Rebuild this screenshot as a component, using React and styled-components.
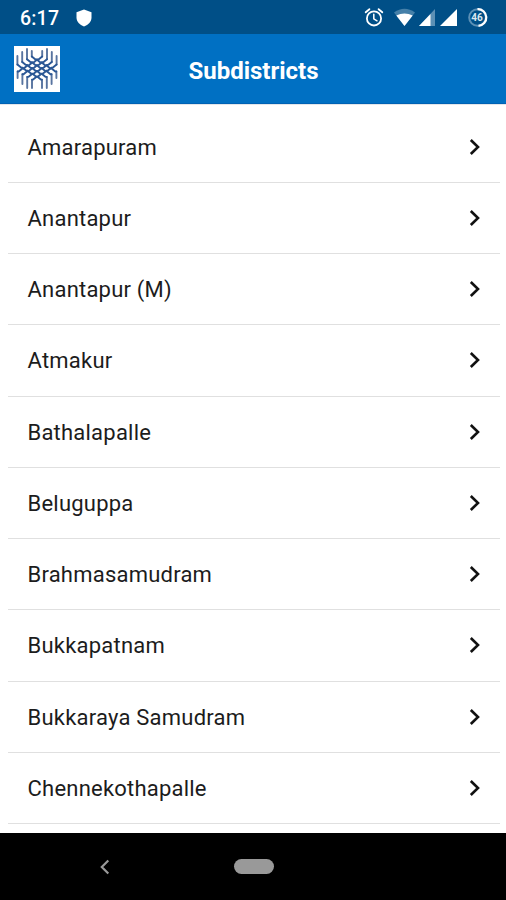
import React from 'react';
import styled, { createGlobalStyle } from 'styled-components';

const GlobalStyle = createGlobalStyle`
  body {
    margin: 0;
    background: #fff;
    font-family: Roboto, sans-serif;
  }
`;

const Screen = styled.div`
  display: flex;
  flex-direction: column;
  width: 506px;
  height: 900px;
  overflow: hidden;
  background: #fff;
`;

const StatusBar = styled.div`
  display: flex;
  flex: none;
  align-items: center;
  justify-content: space-between;
  box-sizing: border-box;
  height: 34px;
  padding: 2px 18px 0 20px;
  background: #004f87;
  color: #fff;
`;

const StatusGroup = styled.div`
  display: flex;
  align-items: center;
  gap: ${(props) => props.$gap || 0}px;
`;

const Clock = styled.span`
  margin-top: 1px;
  font-size: 19.5px;
  font-weight: 500;
  line-height: 24px;
  letter-spacing: 0.2px;
`;

const Header = styled.header`
  display: grid;
  flex: none;
  grid-template-columns: 46px 1fr 46px;
  align-items: center;
  box-sizing: border-box;
  height: 70px;
  padding: 0 13px 0 14px;
  border-bottom: 1px solid #0062b4;
  background: #0070c3;
`;

const Title = styled.h1`
  margin: 4px 0 0;
  color: #fff;
  font-size: 24px;
  font-weight: 700;
  line-height: 30px;
  text-align: center;
`;

const List = styled.ul`
  flex: 1;
  min-height: 0;
  margin: 0;
  padding: 6.5px 6px 0 8px;
  overflow: hidden;
  border-top: 1px solid #e3e6ea;
  list-style: none;
`;

const Row = styled.li`
  display: flex;
  align-items: center;
  justify-content: space-between;
  box-sizing: border-box;
  height: 71.25px;
  padding: 0 18px 0 19.5px;
  border-bottom: 1.5px solid #e0e0e0;
`;

const RowLabel = styled.span`
  padding-top: 2px;
  color: #1c1c1c;
  font-size: 22px;
  font-weight: 400;
  line-height: 28px;
  letter-spacing: 0.22px;
`;

const NavBar = styled.nav`
  display: grid;
  flex: none;
  grid-template-columns: 210px 87px 1fr;
  align-items: center;
  justify-items: center;
  height: 67px;
  background: #000;
`;

const HomePill = styled.span`
  width: 40px;
  height: 15px;
  border-radius: 8px;
  background: #999;
`;

const subdistricts = [
  'Amarapuram',
  'Anantapur',
  'Anantapur (M)',
  'Atmakur',
  'Bathalapalle',
  'Beluguppa',
  'Brahmasamudram',
  'Bukkapatnam',
  'Bukkaraya Samudram',
  'Chennekothapalle',
];

// The stepped line that carries a strand from its upper arm to its lower arm
const steps = 'l3.7 3h1.25l3.7 3h1.25l3.7 3h1.25l3.7 3h1.25l3.7 3h1';

const strands = [
  { arms: 'M17.8 5V10.5M42.4 25.5V32', cross: `M17.8 10.5${steps}` },
  { arms: 'M13 3V13.2M37.6 28.2V38', cross: `M13 13.2${steps}` },
  { arms: 'M8.2 6V15.9M32.8 30.9V42', cross: `M8.2 15.9${steps}` },
  { arms: 'M3.4 10V18.6M28 33.6V42', cross: `M3.4 18.6${steps}` },
];

function Strands() {
  return strands.map(({ arms, cross }) => (
    <React.Fragment key={cross}>
      <path d={arms} stroke="#5874a0" strokeWidth="1.9" />
      <path d={cross} stroke="#2a5795" strokeWidth="1.9" />
    </React.Fragment>
  ));
}

function Logo() {
  return (
    <svg width="46" height="46" viewBox="0 0 46 46">
      <rect width="46" height="46" fill="#fff" />
      <g fill="none" strokeLinecap="round" strokeLinejoin="round">
        <Strands />
        <g transform="translate(46 0) scale(-1 1)">
          <Strands />
        </g>
      </g>
    </svg>
  );
}

function ShieldIcon() {
  return (
    <svg width="16" height="18" viewBox="0 0 16 18">
      <path d="M8 .5L15.5 3.3V8.5C15.5 12.6 12.3 16 8 17.5C3.7 16 .5 12.6 .5 8.5V3.3Z" fill="#fff" />
    </svg>
  );
}

function StatusIcons() {
  return (
    <svg width="124" height="22" viewBox="364 7 124 22">
      <g fill="none" stroke="#fff" strokeWidth="1.8" strokeLinecap="round">
        <circle cx="374" cy="18.4" r="7.1" />
        <path d="M365.7 12.3L369.4 9.2M378.6 9.2L382.3 12.3" />
        <path d="M373.8 14.2V18.8L377 20.8" strokeWidth="1.5" />
      </g>
      <path d="M394 12.5Q404.5 5 415 12.5L404.5 26Z" fill="#4580a9" />
      <path d="M396.3 15.5Q404.5 11.5 412.7 15.5L404.5 26Z" fill="#fff" />
      <path d="M435 9V26H419Z" fill="#5c90b5" />
      <path d="M430.5 14V26H419Z" fill="#fff" />
      <path d="M457 9V26H440Z" fill="#fff" />
      <circle cx="477.5" cy="17.5" r="8.3" fill="none" stroke="#5c90b5" strokeWidth="2" />
      <path d="M477.5 9.2A8.3 8.3 0 0 1 478.5 25.8" fill="none" stroke="#fff" strokeWidth="2.2" />
      <text x="477" y="21.2" fill="#dce8f1" fontSize="10" fontWeight="700" textAnchor="middle">46</text>
    </svg>
  );
}

function ChevronIcon() {
  return (
    <svg width="14" height="18" viewBox="0 0 14 18">
      <path d="M2.8 2L10 9L2.8 16" fill="none" stroke="#111" strokeWidth="2.6" />
    </svg>
  );
}

function BackIcon() {
  return (
    <svg width="12" height="16" viewBox="0 0 12 16">
      <path d="M9.3 1.5L2.8 8L9.3 14.5" fill="none" stroke="#999" strokeWidth="2.2" />
    </svg>
  );
}

function SubdistrictRow({ name }) {
  return (
    <Row>
      <RowLabel>{name}</RowLabel>
      <ChevronIcon />
    </Row>
  );
}

export default function App() {
  return (
    <Screen>
      <GlobalStyle />
      <StatusBar>
        <StatusGroup $gap={17}>
          <Clock>6:17</Clock>
          <ShieldIcon />
        </StatusGroup>
        <StatusIcons />
      </StatusBar>
      <Header>
        <Logo />
        <Title>Subdistricts</Title>
      </Header>
      <List>
        {subdistricts.map((name) => <SubdistrictRow key={name} name={name} />)}
      </List>
      <NavBar>
        <BackIcon />
        <HomePill />
      </NavBar>
    </Screen>
  );
}
